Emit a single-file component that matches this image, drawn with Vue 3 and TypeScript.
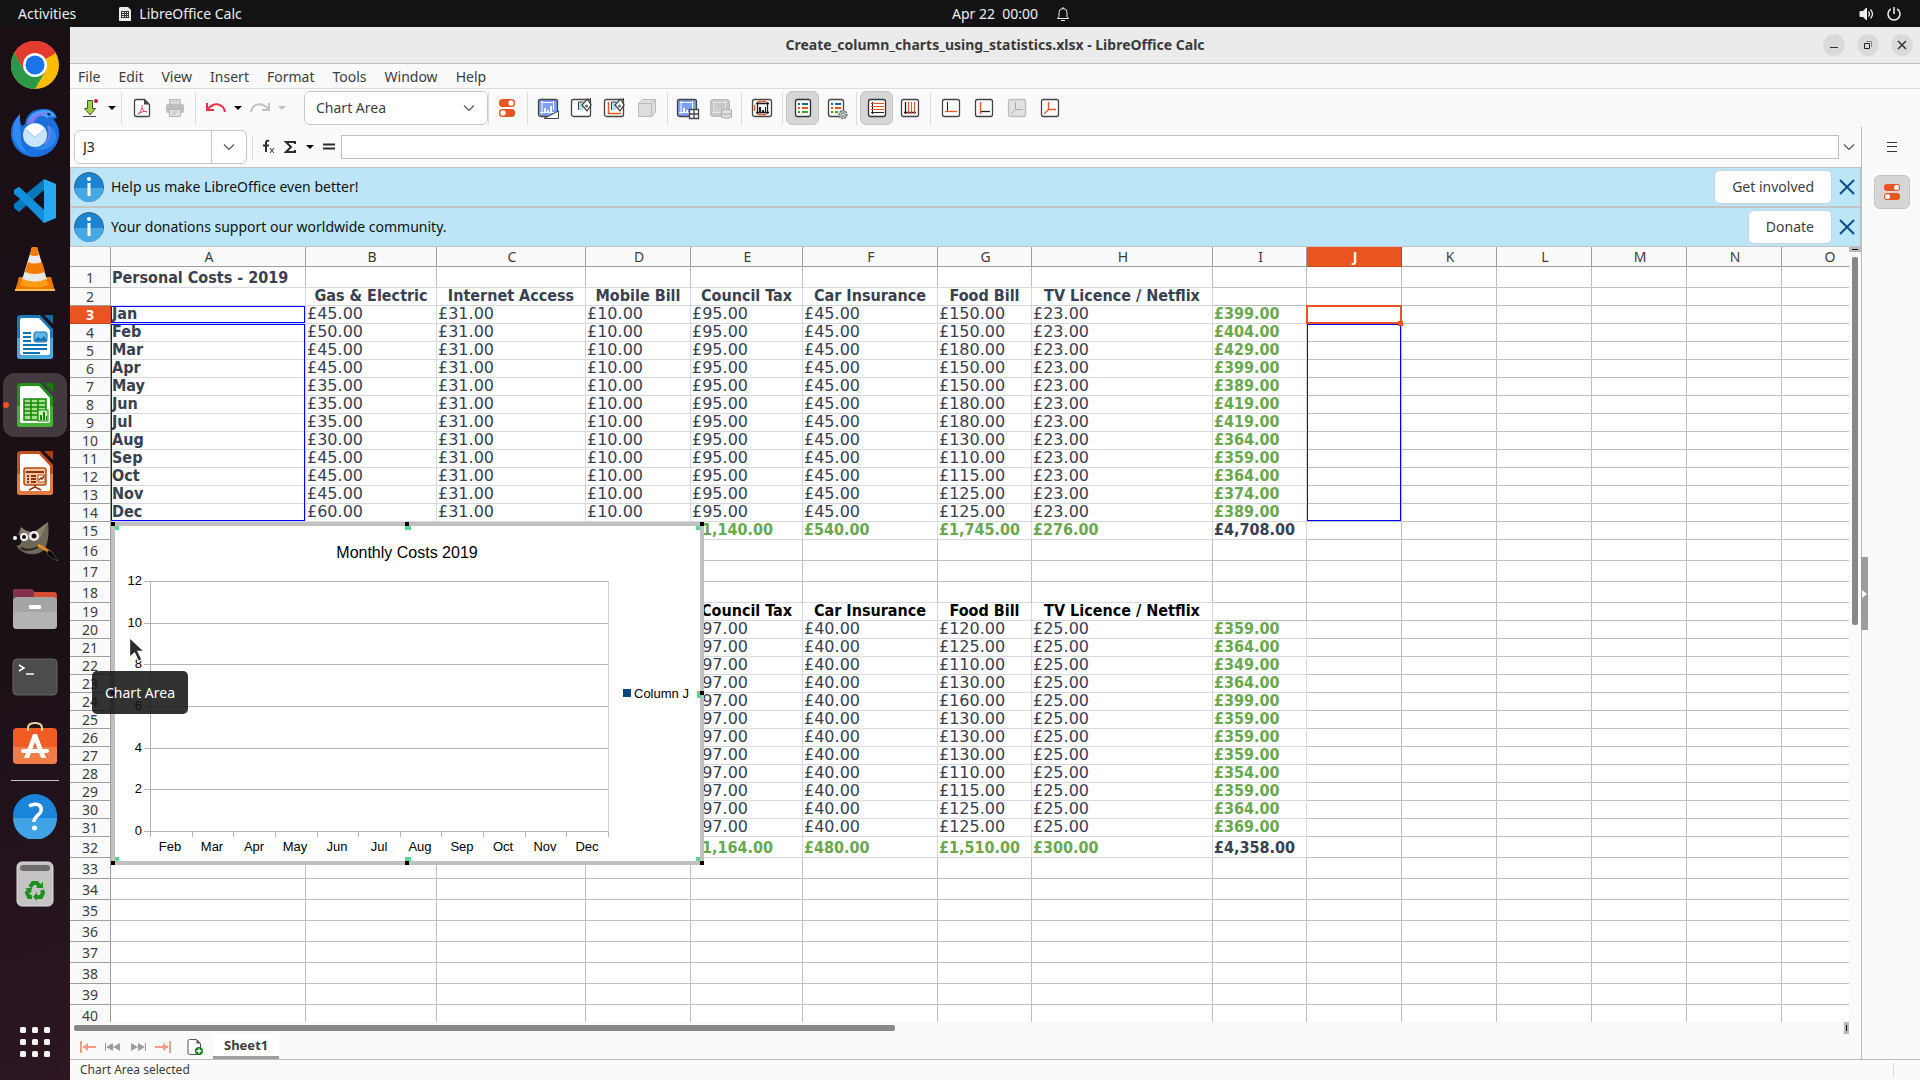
<script setup lang="ts">
import { ref } from 'vue'

interface Cell { text: string; kind: string; edge: string }
interface Row { n: number; height: number; cells: Cell[] }

const columns = [
  { name: 'A', width: 195 }, { name: 'B', width: 131 }, { name: 'C', width: 149 },
  { name: 'D', width: 105 }, { name: 'E', width: 112 }, { name: 'F', width: 135 },
  { name: 'G', width: 94 }, { name: 'H', width: 181 }, { name: 'I', width: 94 },
  { name: 'J', width: 95 }, { name: 'K', width: 95 }, { name: 'L', width: 95 },
  { name: 'M', width: 95 }, { name: 'N', width: 95 }, { name: 'O', width: 95 },
]

const months = ['Jan', 'Feb', 'Mar', 'Apr', 'May', 'Jun', 'Jul', 'Aug', 'Sep', 'Oct', 'Nov', 'Dec']
const gas = [45, 50, 45, 45, 35, 35, 35, 30, 45, 45, 45, 60]
const food2019 = [150, 150, 180, 150, 150, 180, 180, 130, 110, 115, 125, 125]
const total2019 = [399, 404, 429, 399, 389, 419, 419, 364, 359, 364, 374, 389]
const food2020 = [120, 125, 110, 130, 160, 130, 130, 130, 110, 115, 125, 125]
const total2020 = [359, 364, 349, 364, 399, 359, 359, 359, 354, 359, 364, 369]
const heads = ['', 'Gas & Electric', 'Internet Access', 'Mobile Bill', 'Council Tax', 'Car Insurance', 'Food Bill', 'TV Licence / Netflix']

const pounds = (v: number): string => '£' + v.toLocaleString('en-GB') + '.00'

function valueAt(row: number, col: number): [string, string] {
  if (row === 1 && col === 0) return ['Personal Costs - 2019', 'bold']
  if (row === 2 && col < 8) return [heads[col], 'bold center']
  if (row >= 3 && row <= 14) {
    const i = row - 3
    if (col === 0) return [months[i], 'bold']
    if (col === 8) return [pounds(total2019[i]), 'bold green']
    const v = [0, gas[i], 31, 10, 95, 45, food2019[i], 23][col]
    return v ? [pounds(v), ''] : ['', '']
  }
  if (row === 15 && col >= 4 && col <= 8) {
    return [pounds([1140, 540, 1745, 276, 4708][col - 4]), col === 8 ? 'bold' : 'bold green']
  }
  if (row === 19 && col >= 4 && col < 8) return [heads[col], 'bold center black']
  if (row >= 20 && row <= 31) {
    const i = row - 20
    if (col === 8) return [pounds(total2020[i]), 'bold green']
    const v = [0, 0, 0, 0, 97, 40, food2020[i], 25][col]
    return v ? [pounds(v), ''] : ['', '']
  }
  if (row === 32 && col >= 4 && col <= 8) {
    return [pounds([1164, 480, 1510, 300, 4358][col - 4]), col === 8 ? 'bold' : 'bold green']
  }
  return ['', '']
}

function edgeAt(row: number, col: number): string {
  const heading = row === 2 || row === 19
  const body = (row >= 3 && row <= 15) || (row >= 20 && row <= 32)
  if ((heading && col < 8) || (body && col < 9)) return 'soft'
  if ((row === 1 || row === 18) && col < 8) return 'soft-bottom'
  return ''
}

const tall = (n: number): boolean => n === 1 || (n >= 16 && n <= 18) || n >= 32

const rows: Row[] = Array.from({ length: 40 }, (_, i) => {
  const n = i + 1
  return {
    n,
    height: tall(n) ? 21 : 18,
    cells: columns.map((_c, col) => {
      const [text, kind] = valueAt(n, col)
      return { text, kind, edge: edgeAt(n, col) }
    }),
  }
})

const menus = ['File', 'Edit', 'View', 'Insert', 'Format', 'Tools', 'Window', 'Help']
const notices = [
  { text: 'Help us make LibreOffice even better!', action: 'Get involved' },
  { text: 'Your donations support our worldwide community.', action: 'Donate' },
]
const plot = { left: 39, top: 59, width: 458, height: 250 }
const ticks = [12, 10, 8, 6, 4, 2, 0].map((v, i) => ({ v, y: Math.round(plot.top + (plot.height / 6) * i) }))
const step = plot.width / 11
const cats = months.slice(1).map((m, i) => ({ m, x: Math.floor(plot.left + step * (i + 0.5)) }))
const marks = Array.from({ length: 12 }, (_, i) => Math.round(plot.left + step * i))

const element = ref('Chart Area')
const nameBox = ref('J3')
const formula = ref('')
</script>

<template>
  <div class="desktop">
    <header class="topbar">
      <div class="top-left">
        <button class="plain">Activities</button>
        <button class="plain app-menu">
          <svg width="12" height="14" viewBox="0 0 12 14"><path d="M1 0h8l3 3v11H0V1z" fill="#ececec" /><path d="M2 4h8v7H2z" fill="#333" /><path d="M3 5h2v1H3zm3 0h1v1H6zm2 0h1v1H8zM3 7h2v1H3zm3 0h1v1H6zm2 0h1v1H8zM3 9h2v1H3zm3 0h1v1H6zm2 0h1v1H8z" fill="#ececec" /></svg>
          <span>LibreOffice Calc</span>
        </button>
      </div>
      <button class="plain clock">
        <span>Apr 22&nbsp; 00:00</span>
        <svg width="14" height="16" viewBox="0 0 14 16" fill="none" stroke="#eee"><path d="M1.500 12.500h11l-1.500-2V6.500a4 4 0 0 0-8 0v4zM7 1v2M5 14.500h4" /></svg>
      </button>
      <div class="top-right">
        <svg width="16" height="16" viewBox="0 0 16 16" fill="none" stroke="#eee"><path d="M1 5.500h3L7.500 2v12L4 10.500H1z" fill="#eee" /><path d="M9.500 5.500q2 2.500 0 5M11.500 3.500q4 4.500 0 9" stroke-width="1.300" /></svg>
        <svg width="16" height="16" viewBox="0 0 16 16" fill="none" stroke="#eee" stroke-width="1.500"><path d="M4.800 3a6 6 0 1 0 6.400 0M8 1v7" /></svg>
      </div>
    </header>

    <div class="main">
      <nav class="dock" aria-label="Dock">
        <button class="dock-item" aria-label="Chrome">
          <svg width="48" height="48" viewBox="0 0 48 48"><circle cx="24" cy="24" r="24" fill="#fbbc04" /><path d="M24 24L3.200 12A24 24 0 0 1 44.800 12z" fill="#e33b2e" /><path d="M24 12h20.800A24 24 0 0 0 3.200 12l10.400 18z" fill="#e33b2e" /><path d="M3.200 12A24 24 0 0 0 24 48l10.400-18L24 34l-10.400-4z" fill="#2a9846" /><circle cx="24" cy="24" r="12" fill="#fff" /><circle cx="24" cy="24" r="9.500" fill="#1a73e8" /></svg>
        </button>
        <button class="dock-item" aria-label="Thunderbird">
          <svg width="48" height="48" viewBox="0 0 48 48"><path d="M14 15Q16 1 31 0q12-1 15 9l-4 1q6 6 6 14a24 23 0 0 1-48 2Q-1 14 9 5q-1 7 2 12z" fill="#1a6fdd" /><path d="M9 5Q1 13 2 27q3 14 17 19Q8 38 10 25 8 14 9 5" fill="#2f8bf0" /><path d="M16 13Q20 2 33 1q9 0 12 7-6-2-9 1-4-4-11-1-5 1-9 5" fill="#46a4ff" /><path d="M15 15Q24 1 38 4 26 6 22 14z" fill="#8a78e8" /><circle cx="24" cy="26" r="12" fill="#c9e4ff" /><path d="M14 20l10 8 10-8q-4-5-10-5t-10 5" fill="#fff" /><path d="M14 20l10 8 10-8" fill="none" stroke="#9ac5ec" /><path d="M37 16q6 14-7 22l-9 1q14 6 23-6 4-11-7-17" fill="#2989ef" /><path d="M37 17q5 11-4 18" fill="none" stroke="#6f7ff0" stroke-width="2" /><path d="M36 4h3l1 2-3 1z" fill="#0b2e70" /></svg>
        </button>
        <button class="dock-item" aria-label="Visual Studio Code">
          <svg width="44" height="46" viewBox="0 0 44 46"><path d="M31 1l12 5v34l-12 5z" fill="#27a9f2" /><path d="M31 1v11L6 34l-5-4v-4z" fill="#0878bd" /><path d="M1 16v-4l5-3 25 23v13L6 20z" fill="#0b8edb" /><path d="M1 12l5-3 25 23v13z" fill="#118fdd" /></svg>
        </button>
        <button class="dock-item" aria-label="VLC">
          <svg width="42" height="46" viewBox="0 0 42 46"><path d="M5 31h32l4 14H1z" fill="#ee7900" /><path d="M1 43h40v2H1z" fill="#ffc04a" /><path d="M18 1h5l10 33q-12 6-25 0z" fill="#e9e9e9" /><path d="M18 1h5l2 8q-4 2-9 0zM14 16q6 3 14 0l3 10q-10 4-20 0z" fill="#f47b00" /><path d="M9 33q12 5 23 0l3 6q-14 5-29 0z" fill="#ff9b15" /></svg>
        </button>
        <button class="dock-item" aria-label="LibreOffice Writer">
          <svg width="38" height="46" viewBox="0 0 38 46"><path d="M5 1h19l13 14v27q0 3-3 3H4q-3 0-3-3V5q0-4 4-4" fill="#1b79b8" /><path d="M1 24h36v18q0 3-3 3H4q-3 0-3-3z" fill="#4ba9de" /><path d="M6 4h17l11 12v23q0 2-2 2H6q-2 0-2-2V6q0-2 2-2" fill="#fff" /><path d="M28 1h9v9z" fill="#156aa5" /><path d="M7 18h8v2H7zm0 4h8v2H7zm0 4h8v2H7zm0 4h24v2H7zm0 4h24v2H7zm0 4h17v2H7z" fill="#0b75b9" /><rect x="18" y="18" width="13" height="10" rx="2" fill="#66b4df" stroke="#0b75b9" /><path d="M18 27l4-4 3 2 3-3 3 5z" fill="#0b75b9" /></svg>
        </button>
        <button class="dock-item active" aria-label="LibreOffice Calc">
          <svg width="38" height="46" viewBox="0 0 38 46"><path d="M5 1h19l13 14v27q0 3-3 3H4q-3 0-3-3V5q0-4 4-4" fill="#219312" /><path d="M1 24h36v18q0 3-3 3H4q-3 0-3-3z" fill="#44b236" /><path d="M6 4h17l11 12v23q0 2-2 2H6q-2 0-2-2V6q0-2 2-2" fill="#fff" /><path d="M28 1h9v9z" fill="#147d0b" /><path d="M8 17h22v21H8z" fill="#a7e08a" stroke="#13860a" stroke-width="1.500" /><path d="M8 21h22M8 25h22M8 29h22M8 33h22M15 17v21M22 17v21" stroke="#13860a" stroke-width="1.500" /><rect x="22" y="28" width="10" height="11" fill="#ccefb9" stroke="#13860a" /><path d="M24 33h2v5h-2zm3-3h2v8h-2zm3 4h1v4h-1z" fill="#13860a" /></svg>
        </button>
        <button class="dock-item" aria-label="LibreOffice Impress">
          <svg width="38" height="46" viewBox="0 0 38 46"><path d="M5 1h19l13 14v27q0 3-3 3H4q-3 0-3-3V5q0-4 4-4" fill="#c2501c" /><path d="M1 24h36v18q0 3-3 3H4q-3 0-3-3z" fill="#e07b44" /><path d="M6 4h17l11 12v23q0 2-2 2H6q-2 0-2-2V6q0-2 2-2" fill="#fff" /><path d="M28 1h9v9z" fill="#a8400e" /><rect x="8" y="18" width="22" height="17" rx="2" fill="#f4c5a6" stroke="#b34a10" stroke-width="1.500" /><path d="M10 21h18v2H10zm5 4h5v2h-5zm0 3h5v2h-5zm0 3h5v2h-5zm-4-6h2v2h-2zm0 3h2v2h-2zm0 3h2v2h-2z" fill="#8f3508" /><path d="M22 25h7v7h-7z" fill="#fff" stroke="#b34a10" /><path d="M23 30l2-2 1 1 2-3M19 35v2l-6 3M19 37l6 3" fill="none" stroke="#8f3508" stroke-width="1.500" /></svg>
        </button>
        <button class="dock-item" aria-label="GIMP">
          <svg width="48" height="44" viewBox="0 0 48 44"><path d="M10 8q7 7 15 4l12-9q2 16-3 27-8 8-20 4Q6 30 4 24z" fill="#6f6858" /><path d="M10 8q7 7 15 4l12-9-8 16-18 3z" fill="#8a816d" /><circle cx="5" cy="21" r="6" fill="#151515" /><circle cx="4" cy="19" r="2" fill="#fff" /><circle cx="13" cy="18" r="4" fill="#eee" /><circle cx="23" cy="17" r="5" fill="#eee" /><circle cx="13" cy="18" r="2" fill="#111" /><circle cx="23" cy="17" r="2.500" fill="#111" /><path d="M10 29q8 4 17-1" stroke="#222" stroke-width="2" fill="none" /><path d="M27 26l12 7" stroke="#e88b20" stroke-width="3" /><path d="M37 31l4 2 6 9q-7-2-11-7z" fill="#080808" stroke="#777" stroke-width=".5" /></svg>
        </button>
        <button class="dock-item" aria-label="Files">
          <svg width="46" height="42" viewBox="0 0 46 42"><path d="M1 12V4q0-3 3-3h14q3 0 4 3h20q3 0 3 4v4z" fill="#d84c2f" /><path d="M1 12V4q0-3 3-3h14q3 0 4 3v8z" fill="#84304f" /><rect x="1" y="9" width="44" height="32" rx="4" fill="#a5a5a5" /><path d="M1 24h44v13q0 4-4 4H5q-4 0-4-4z" fill="#b3b3b3" /><rect x="17" y="17" width="12" height="4" rx="1" fill="#fff" /></svg>
        </button>
        <button class="dock-item" aria-label="Terminal">
          <svg width="46" height="38" viewBox="0 0 46 38"><rect x="1" y="1" width="44" height="36" rx="4" fill="#4c4c4c" stroke="#656565" /><path d="M7 7l5 3-5 3M14 16h8" fill="none" stroke="#fff" stroke-width="1.500" /></svg>
        </button>
        <button class="dock-item" aria-label="Software">
          <svg width="46" height="48" viewBox="0 0 46 48"><rect x="1" y="7" width="44" height="36" rx="4" fill="#f05c24" /><path d="M1 26h44v13q0 4-4 4H5q-4 0-4-4z" fill="#f27c48" /><path d="M16 10V7q0-5 7-5t7 5v3" fill="none" stroke="#f6d7a5" stroke-width="2" /><path d="M21 13h4l9 24h-5l-6-16-6 16h-5z" fill="#fff" /><rect x="9" y="28" width="28" height="4" rx="2" fill="#fff" /></svg>
        </button>
        <div class="dock-sep"></div>
        <button class="dock-item" aria-label="Help">
          <svg width="46" height="46" viewBox="0 0 46 46"><circle cx="23" cy="23" r="22" fill="#1a85da" /><path d="M1 25a22 22 0 0 0 44 0z" fill="#3fa3e6" /><path d="M17 13q6-3 10-1 4 3 1 8l-4 4q-2 2-2 5" fill="none" stroke="#fff" stroke-width="3.500" /><circle cx="22.500" cy="35" r="2.500" fill="#fff" /></svg>
        </button>
        <button class="dock-item" aria-label="Trash">
          <svg width="38" height="46" viewBox="0 0 38 46"><rect x="1" y="1" width="36" height="44" rx="5" fill="#c4c4c4" stroke="#dedede" /><rect x="4" y="4" width="30" height="6" rx="3" fill="#6d6d6d" /><g fill="none" stroke="#1f8f1d" stroke-width="4"><path d="M14 26l3-4h4l2 3M26 29l1 3-2 4h-4M16 36h-3l-2-4 2-3" /></g><path d="M20 27h7v-6zM21 31v9l-4-4zM9 27l7 0-1 5z" fill="#1f8f1d" /></svg>
        </button>
        <button class="dock-item last" aria-label="Show applications">
          <svg width="30" height="30" viewBox="0 0 30 30" fill="#f3f3f3"><rect v-for="i in 9" :key="i" :x="((i - 1) % 3) * 12" :y="Math.floor((i - 1) / 3) * 12" width="6" height="6" rx="1.500" /></svg>
        </button>
      </nav>

      <section class="window">
        <div class="titlebar">
          <h1>Create_column_charts_using_statistics.xlsx - LibreOffice Calc</h1>
          <div class="win-buttons">
            <button aria-label="Minimise"><svg width="10" height="10" viewBox="0 0 10 10"><path d="M1 7.500h8" stroke="#333" /></svg></button>
            <button aria-label="Restore"><svg width="10" height="10" viewBox="0 0 10 10" fill="none"><path d="M3 1.500h5.500V7" stroke="#888" /><path d="M1.500 3.500h5v5h-5z" stroke="#222" /></svg></button>
            <button aria-label="Close"><svg width="10" height="10" viewBox="0 0 10 10"><path d="M1 1l8 8M9 1L1 9" stroke="#333" stroke-width="1.500" /></svg></button>
          </div>
        </div>

        <nav class="menubar" aria-label="Menu bar">
          <button v-for="m in menus" :key="m">{{ m }}</button>
        </nav>

        <div class="toolbar" role="toolbar" aria-label="Chart">
          <button class="tool" aria-label="Save"><svg width="24" height="24" viewBox="0 0 24 24"><path d="M9.500 4.500h5v8h3L12 19l-5.500-6.500h3z" fill="#9fd04a" stroke="#4d5a30" /><path d="M5 20.500h13" stroke="#444" /><circle cx="18" cy="5" r="2" fill="#d11538" /></svg></button>
          <button class="drop" aria-label="Save options"></button>
          <span class="sep"></span>
          <button class="tool" aria-label="Export as PDF"><svg width="24" height="24" viewBox="0 0 24 24"><path d="M6.500 3.500h8l5 5v11q0 1-1 1h-12q-2 0-2-2v-13q0-2 2-2z" fill="#fff" stroke="#444" stroke-width="1.300" /><path d="M14 3.500v5h5z" fill="#444" /><path d="M12 9v3q-2 5-4 6 6-4 9-2-4 0-5-4" fill="none" stroke="#e8445f" /></svg></button>
          <button class="tool" aria-label="Print"><svg width="24" height="24" viewBox="0 0 24 24"><path d="M6.500 3.500h11v5h-11z" fill="#d9d9d9" stroke="#bbb" /><rect x="3" y="8" width="18" height="9" rx="2" fill="#bebebe" /><path d="M6.500 13.500h11v7h-11z" fill="#e4e4e4" stroke="#b5b5b5" /><path d="M9 16h6M9 18h4" stroke="#bbb" /></svg></button>
          <span class="sep"></span>
          <button class="tool" aria-label="Undo"><svg width="24" height="24" viewBox="0 0 24 24" fill="none" stroke="#ef2f48" stroke-width="2"><path d="M3 7v7h7M3.500 13q6-6 11-4.500Q20 10 21 16" /></svg></button>
          <button class="drop" aria-label="Undo list"></button>
          <button class="tool" aria-label="Redo"><svg width="24" height="24" viewBox="0 0 24 24" fill="none" stroke="#c1c1c1" stroke-width="2"><path d="M21 7v7h-7M20.500 13q-6-6-11-4.500Q4 10 3 16" /></svg></button>
          <button class="drop off" aria-label="Redo list"></button>
          <label class="combo">
            <select v-model="element" aria-label="Select chart element"><option>Chart Area</option></select>
            <svg width="12" height="8" viewBox="0 0 12 8"><path d="M1 1.500l5 5 5-5" fill="none" stroke="#555" stroke-width="1.200" /></svg>
          </label>
          <span class="sep tight"></span>
          <button class="tool" aria-label="Format selection"><svg width="24" height="24" viewBox="0 0 24 24"><rect x="4" y="3" width="16" height="8" rx="3.500" fill="#e95420" /><circle cx="16" cy="7" r="2.700" fill="#fff" /><rect x="4" y="13" width="16" height="8" rx="3.500" fill="#e95420" /><circle cx="8" cy="17" r="2.700" fill="#fff" /></svg></button>
          <span class="sep"></span>
          <button class="tool" aria-label="Chart type"><svg width="24" height="24" viewBox="0 0 24 24"><rect x="2.500" y="3.500" width="19" height="17" rx="2" fill="#7d9ff6" stroke="#454545" stroke-width="1.300" /><path d="M6 5v13M4 16.500h14M5 6.500h13M17.500 5v9" stroke="#fff" /><path d="M8 12h2v5H8zm3 2h2v3h-2zm3-4h2v7h-2z" fill="#fff" /><path d="M8 22.500L22.500 15v7.500z" fill="#fff" stroke="#444" /></svg></button>
          <button class="tool" aria-label="Chart area"><svg width="24" height="24" viewBox="0 0 24 24"><rect x="2.500" y="3.500" width="19" height="17" rx="2" fill="#fff" stroke="#454545" stroke-width="1.300" /><path d="M9.500 14V6h5" fill="#a8e1f6" stroke="#444" /><path d="M10 7h4v7h-4z" fill="#a8e1f6" /><path d="M18.500 3l3.500 6-4 6-5-6z" fill="#fff" stroke="#444" stroke-width="1.300" /><circle cx="17.500" cy="10" r="1.500" fill="#666" /><path d="M21.500 2v8" fill="none" stroke="#444" /></svg></button>
          <button class="tool" aria-label="Chart wall"><svg width="24" height="24" viewBox="0 0 24 24"><rect x="2.500" y="3.500" width="19" height="17" rx="2" fill="#fff" stroke="#454545" stroke-width="1.300" /><path d="M6.500 6v11.500H19" fill="none" stroke="#e95420" stroke-width="1.500" /><path d="M9.500 14V6h5" fill="#a8e1f6" stroke="#444" /><path d="M10 7h4v7h-4z" fill="#a8e1f6" /><path d="M18.500 3l3.500 6-4 6-5-6z" fill="#fff" stroke="#444" stroke-width="1.300" /><circle cx="17.500" cy="10" r="1.500" fill="#666" /><path d="M21.500 2v8" fill="none" stroke="#444" /></svg></button>
          <button class="tool" aria-label="3D view"><svg width="24" height="24" viewBox="0 0 24 24" fill="#dedede" stroke="#bbb"><path d="M3.500 7.500l4-4h13v13l-4 4h-13z" /><path d="M3.500 7.500h13v13M16.500 7.500l4-4" fill="none" /></svg></button>
          <span class="sep"></span>
          <button class="tool" aria-label="Data ranges"><svg width="24" height="24" viewBox="0 0 24 24"><rect x="1.500" y="3.500" width="19" height="17" rx="2" fill="#7d9ff6" stroke="#454545" stroke-width="1.300" /><path d="M5 5v13M3 16.500h14M4 6.500h13M16.500 5v9" stroke="#fff" /><path d="M7 12h2v5H7zm3 2h2v3h-2z" fill="#fff" /><path d="M13.500 13.500h9v9h-9zM18 13.500v9M13.500 18h9" fill="#fff" stroke="#454545" stroke-width="1.300" /></svg></button>
          <button class="tool" aria-label="Data table"><svg width="24" height="24" viewBox="0 0 24 24"><rect x="1.500" y="3.500" width="19" height="17" rx="2" fill="#c8c8c8" stroke="#bbb" /><path d="M5 5v13M3 16.500h10M4 6.500h13M16.500 5v9M8 12v5M11 13v4" stroke="#e8e8e8" /><path d="M12.500 14v7q5 3 10 0v-7q-5-2-10 0M12.500 17.500q5 2 10 0" fill="#ddd" stroke="#aaa" /></svg></button>
          <span class="sep"></span>
          <button class="tool" aria-label="Titles"><svg width="24" height="24" viewBox="0 0 24 24"><rect x="2.500" y="3.500" width="19" height="17" rx="2" fill="#fff" stroke="#454545" stroke-width="1.300" /><path d="M8 5.500h8M8 18.500h8M4.500 9v6" stroke="#e95420" stroke-width="1.300" /><path d="M7.500 6v12M6 16.500h13M6 7.500h13M17.500 6v12" stroke="#222" stroke-width="1.300" /><path d="M9 11h2v5H9zm3 3h2v2h-2zm3-3h1v5h-1z" fill="#222" /></svg></button>
          <span class="sep"></span>
          <button class="tool on" aria-label="Legend"><svg width="24" height="24" viewBox="0 0 24 24"><rect x="4.500" y="3.500" width="15" height="17" rx="2" fill="#fff" stroke="#333" stroke-width="1.300" /><path d="M7 8h2M11 8h6" stroke="#1269a8" stroke-width="2" /><path d="M7 12h2M11 12h6" stroke="#e95420" stroke-width="2" /><path d="M7 16h2M11 16h6" stroke="#44a514" stroke-width="2" /></svg></button>
          <button class="tool" aria-label="Format legend"><svg width="24" height="24" viewBox="0 0 24 24"><rect x="4.500" y="3.500" width="15" height="17" rx="2" fill="#fff" stroke="#444" stroke-width="1.300" /><path d="M7 8h2M11 8h6" stroke="#1269a8" stroke-width="2" /><path d="M7 12h2M11 12h6" stroke="#e95420" stroke-width="2" /><path d="M7 16h2M11 16h3" stroke="#44a514" stroke-width="2" /><circle cx="19" cy="18.500" r="4" fill="#bbb" stroke="#777" stroke-dasharray="2 1" stroke-width="1.500" /><circle cx="19" cy="18.500" r="1.500" fill="#fff" stroke="#777" /></svg></button>
          <span class="sep"></span>
          <button class="tool on" aria-label="Horizontal grids"><svg width="24" height="24" viewBox="0 0 24 24"><rect x="3.500" y="3.500" width="17" height="17" rx="2" fill="#fff" stroke="#333" stroke-width="1.300" /><path d="M7.500 6v12M6 16.500h13" fill="none" stroke="#222" /><path d="M6 7.500h13M6 10.500h13M6 13.500h13" stroke="#e95420" /></svg></button>
          <button class="tool" aria-label="Vertical grids"><svg width="24" height="24" viewBox="0 0 24 24"><rect x="3.500" y="3.500" width="17" height="17" rx="2" fill="#fff" stroke="#444" stroke-width="1.300" /><path d="M7.500 6v12M6 16.500h12" stroke="#222" stroke-width="1.300" /><path d="M10.500 6v12M13.500 6v12M16.500 6v12" stroke="#e95420" /></svg></button>
          <span class="sep"></span>
          <button class="tool" aria-label="X axis"><svg width="24" height="24" viewBox="0 0 24 24"><rect x="3.500" y="3.500" width="17" height="17" rx="2" fill="#fff" stroke="#444" stroke-width="1.300" /><path d="M8.500 6v9" stroke="#222" /><path d="M6 15.500h12" stroke="#e95420" stroke-width="1.300" /></svg></button>
          <button class="tool" aria-label="Y axis"><svg width="24" height="24" viewBox="0 0 24 24"><rect x="3.500" y="3.500" width="17" height="17" rx="2" fill="#fff" stroke="#444" stroke-width="1.300" /><path d="M8 15.500h10" stroke="#222" stroke-width="1.300" /><path d="M8.500 6v12" stroke="#e95420" stroke-width="1.300" /></svg></button>
          <button class="tool" aria-label="Z axis"><svg width="24" height="24" viewBox="0 0 24 24"><rect x="3.500" y="3.500" width="17" height="17" rx="2" fill="#e1e1e1" stroke="#bdbdbd" stroke-width="1.300" /><path d="M10.500 6v7.500H18M10.500 13.500L6 18" fill="none" stroke="#aaa" /></svg></button>
          <button class="tool" aria-label="All axes"><svg width="24" height="24" viewBox="0 0 24 24"><rect x="3.500" y="3.500" width="17" height="17" rx="2" fill="#fff" stroke="#444" stroke-width="1.300" /><path d="M10.500 6v7.500H18M10.500 13.500L6 18" fill="none" stroke="#e95420" stroke-width="1.300" /></svg></button>
        </div>

        <div class="workspace">
          <div class="document">
            <div class="formula-bar">
              <div class="name-box">
                <input v-model="nameBox" aria-label="Name box" />
                <button aria-label="Named ranges"><svg width="12" height="8" viewBox="0 0 12 8"><path d="M1 1.500l5 5 5-5" fill="none" stroke="#555" stroke-width="1.200" /></svg></button>
              </div>
              <span class="fsep"></span>
              <button class="fn" aria-label="Function wizard"><svg width="14" height="18" viewBox="0 0 14 18" fill="none" stroke="#2d2d2d"><path d="M7 3q-3-1-3 2v9M1 7.500h6" stroke-width="2" /><path d="M8 10l4 5M12 10l-4 5" /></svg></button>
              <button class="fn" aria-label="Select function"><svg width="12" height="18" viewBox="0 0 12 18"><path d="M11 6V4H2l5 5-5 5h9v-2" fill="none" stroke="#2d2d2d" stroke-width="2" /></svg></button>
              <button class="drop" aria-label="Function list"></button>
              <button class="fn" aria-label="Formula"><svg width="12" height="18" viewBox="0 0 12 18"><path d="M0 6.500h12M0 10.500h12" stroke="#2d2d2d" stroke-width="2" /></svg></button>
              <input v-model="formula" class="formula" aria-label="Formula input" />
              <button class="expand" aria-label="Expand formula bar"><svg width="12" height="8" viewBox="0 0 12 8"><path d="M1 1.500l5 5 5-5" fill="none" stroke="#555" stroke-width="1.200" /></svg></button>
            </div>

            <div v-for="n in notices" :key="n.action" class="infobar">
              <svg width="30" height="30" viewBox="0 0 30 30"><circle cx="15" cy="15" r="14.500" fill="#1c84d4" stroke="#39617e" /><path d="M1 16a14 14 0 0 0 28 0z" fill="#47a7e3" /><circle cx="15" cy="7" r="2" fill="#fff" /><path d="M13.500 11h3v13h-3z" fill="#fff" /></svg>
              <p>{{ n.text }}</p>
              <button class="action">{{ n.action }}</button>
              <button class="close" aria-label="Close infobar"><svg width="16" height="16" viewBox="0 0 16 16"><path d="M1 1l14 14M15 1L1 15" stroke="#0b4f8a" stroke-width="2" /></svg></button>
            </div>

            <div class="grid-row">
              <div class="sheet">
                <table>
                  <colgroup>
                    <col class="rowhead" />
                    <col v-for="c in columns" :key="c.name" :style="{ width: c.width + 'px' }" />
                  </colgroup>
                  <thead>
                    <tr>
                      <th></th>
                      <th v-for="c in columns" :key="c.name" scope="col" :class="{ current: c.name === 'J' }">{{ c.name }}</th>
                    </tr>
                  </thead>
                  <tbody>
                    <tr v-for="r in rows" :key="r.n" :style="{ height: r.height + 'px' }">
                      <th scope="row" :class="{ current: r.n === 3 }">{{ r.n }}</th>
                      <td v-for="(c, i) in r.cells" :key="i" :class="[c.kind, c.edge]">{{ c.text }}</td>
                    </tr>
                  </tbody>
                </table>

                <div class="range label-cell"></div>
                <div class="range categories"></div>
                <div class="range values"></div>
                <div class="cursor-cell"></div>

                <svg class="chart" width="593" height="343" viewBox="0 0 593 343">
                  <rect x="2" y="2" width="589" height="339" fill="#fff" stroke="#c0c0c0" stroke-width="4" />
                  <g fill="#5bd68f">
                    <path d="M4 4h4v4H4zM294 4h6v4h-6zM585 4h4v4h-4zM4 335h4v4H4zM294 335h6v4h-6zM585 335h4v4h-4zM586 169h4v7h-4z" />
                  </g>
                  <path d="M0 0h4v4H0zM294 0h4v4h-4zM589 0h4v4h-4zM0 339h4v4H0zM294 339h4v4h-4zM589 339h4v4h-4zM0 169h4v4H0zM589 169h4v4h-4z" fill="#000" />
                  <text class="chart-title" x="296" y="36" text-anchor="middle">Monthly Costs 2019</text>
                  <g fill="#b3b3b3">
                    <rect v-for="t in ticks" :key="t.v" x="33" :y="t.y" width="464" height="1" />
                    <rect v-for="x in marks" :key="x" :x="x" y="309" width="1" height="6" />
                    <rect x="39" y="59" width="1" height="250" />
                    <rect x="497" y="59" width="1" height="251" fill="#d0d0d0" />
                  </g>
                  <text v-for="t in ticks" :key="t.v" x="31" :y="t.y + 4" text-anchor="end">{{ t.v }}</text>
                  <text v-for="c in cats" :key="c.m" :x="c.x" y="329" text-anchor="middle">{{ c.m }}</text>
                  <rect x="512" y="167" width="8" height="8" fill="#004586" />
                  <text x="523" y="176">Column J</text>
                </svg>

                <div class="tooltip" role="tooltip">Chart Area</div>
                <svg class="pointer" width="20" height="28" viewBox="0 0 20 28"><path d="M1.500 1.500v20l5-4.500 4 8.500 3.500-2-4-8h6.500z" fill="#2b2b2b" stroke="#fff" stroke-width="1.300" /></svg>
              </div>
              <div class="vscroll"><span class="splitter"></span><span class="thumb"></span></div>
            </div>

            <div class="hscroll"><span class="thumb"></span><span class="splitter"></span></div>

            <div class="tabs">
              <button aria-label="First sheet"><svg width="16" height="14" viewBox="0 0 16 14"><path d="M1 1v12M3 7h13" stroke="#f39c80" stroke-width="2" /><path d="M3 7l5-4v8z" fill="#f39c80" /></svg></button>
              <button aria-label="Previous sheet"><svg width="16" height="14" viewBox="0 0 16 14" fill="#9c9c9c"><path d="M0 3h1v8H0zM8 3v8L1 7zM15 3v8L8 7z" /></svg></button>
              <button aria-label="Next sheet"><svg width="16" height="14" viewBox="0 0 16 14" fill="#9c9c9c"><path d="M15 3h1v8h-1zM8 3v8l7-4zM1 3v8l7-4z" /></svg></button>
              <button aria-label="Last sheet"><svg width="16" height="14" viewBox="0 0 16 14"><path d="M15 1v12M0 7h13" stroke="#f39c80" stroke-width="2" /><path d="M13 7L8 3v8z" fill="#f39c80" /></svg></button>
              <button class="add" aria-label="Add sheet"><svg width="16" height="16" viewBox="0 0 16 16"><path d="M2.500.5h7l4 4v11h-11q-1.500 0-1.500-1.500V2Q1 .5 2.500.5z" fill="#fff" stroke="#555" /><path d="M9.500.5v4h4z" fill="#555" /><circle cx="12" cy="12" r="4" fill="#15801f" /><path d="M9.500 12h5M12 9.500v5" stroke="#fff" stroke-width="1.300" /></svg></button>
              <button class="tab">Sheet1</button>
            </div>
          </div>

          <aside class="sidebar" aria-label="Sidebar">
            <button class="side-menu" aria-label="Sidebar settings"><svg width="10" height="10" viewBox="0 0 10 10"><path d="M0 .5h10M0 4.500h10M0 9.500h10" stroke="#333" /></svg></button>
            <button class="side-tab" aria-label="Properties"><svg width="24" height="24" viewBox="0 0 24 24"><rect x="4" y="4" width="16" height="7" rx="3" fill="#e95420" /><circle cx="16.500" cy="7.500" r="2.500" fill="#fff" /><rect x="4" y="13" width="16" height="7" rx="3" fill="#e95420" /><circle cx="7.500" cy="16.500" r="2.500" fill="#fff" /></svg></button>
            <button class="handle" aria-label="Hide sidebar"><svg width="5" height="8" viewBox="0 0 5 8"><path d="M0 0l5 4-5 4z" fill="#fff" /></svg></button>
          </aside>
        </div>

        <footer class="status"><span>Chart Area selected</span><i></i></footer>
      </section>
    </div>
  </div>
</template>

<style>
body { margin: 0; }
</style>

<style scoped>
.desktop { height: 100vh; display: flex; flex-direction: column; overflow: hidden; font: 14px/20px "Noto Sans", sans-serif; color: #3d3d3d; }
.desktop *, .desktop *::before { box-sizing: border-box; }
button { font: inherit; color: inherit; border: 0; padding: 0; margin: 0; background: none; display: flex; align-items: center; justify-content: center; }
input, select { font: inherit; color: #222; border: 0; padding: 0; margin: 0; background: #fff; min-width: 0; }
svg { display: block; flex: none; }

.topbar { height: 27px; flex: none; display: grid; grid-template-columns: 1fr auto 1fr; align-items: center; background: #131313; color: #ededed; padding: 0 18px; }
.top-left { display: flex; gap: 43px; }
.app-menu { gap: 8px; }
.clock { gap: 18px; padding-left: 102px; }
.top-right { display: flex; justify-content: flex-end; gap: 11px; }

.main { flex: 1; min-height: 0; display: flex; }
.dock { width: 70px; flex: none; display: flex; flex-direction: column; align-items: center; gap: 4px; padding: 6px 0; background: linear-gradient(160deg, #190f15 0%, #1c1017 60%, #2c1722 100%); }
.dock-item { width: 64px; height: 64px; flex: none; border-radius: 12px; position: relative; }
.dock-item.active { background: #433a40; }
.dock-item.active::before { content: ""; position: absolute; left: 0; top: 29px; width: 6px; height: 6px; border-radius: 3px; background: #e95420; }
.dock-item.last { margin-top: auto; }
.dock-sep { width: 48px; height: 1px; flex: none; margin: -1px 0; background: #c9c5c7; }

.window { flex: 1; min-width: 0; display: flex; flex-direction: column; background: #fafafa; }
.titlebar { height: 37px; flex: none; display: grid; grid-template-columns: 1fr auto 1fr; align-items: center; background: #ebebeb; border-bottom: 1px solid #bfbfbf; }
.titlebar h1 { grid-column: 2; margin: 0; font: bold 14px/20px "Noto Sans", sans-serif; color: #3a3a3a; }
.win-buttons { display: flex; justify-content: flex-end; gap: 12px; padding-right: 7px; }
.win-buttons button { width: 22px; height: 22px; border-radius: 11px; background: #dadada; }
.menubar { height: 25px; flex: none; display: flex; align-items: center; gap: 18px; padding: 2px 8px 0; border-bottom: 1px solid #dcdcdc; }

.toolbar { height: 38px; flex: none; display: flex; align-items: center; padding-left: 3px; }
.tool { width: 33px; height: 34px; flex: none; border: 1px solid transparent; border-radius: 6px; }
.tool.on { background: #d6d6d6; border-color: #c4c4c4; }
.drop { width: 11px; height: 34px; flex: none; }
.drop::before { content: ""; border: 4px solid transparent; border-top-color: #000; border-bottom: 0; }
.drop.off::before { border-top-color: #c0c0c0; }
.sep { width: 1px; height: 33px; flex: none; margin: 0 3px 0 4px; background: #dcdcdc; }
.sep.tight { margin: 0 1px 0 0; }
.combo { width: 184px; height: 34px; margin-left: 17px; flex: none; display: grid; align-items: center; border: 1px solid #c6c6c6; border-radius: 6px; background: #fff; overflow: hidden; }
.combo select { grid-area: 1 / 1; appearance: none; height: 32px; padding-left: 11px; color: #3d3d3d; }
.combo svg { grid-area: 1 / 1; justify-self: end; margin-right: 12px; }

.workspace { flex: 1; min-height: 0; display: flex; }
.document { flex: 1; min-width: 0; display: flex; flex-direction: column; }
.formula-bar { height: 40px; flex: none; display: flex; align-items: center; padding-left: 4px; }
.name-box { width: 173px; height: 34px; flex: none; display: flex; border: 1px solid #c6c6c6; border-radius: 6px; background: #fff; overflow: hidden; }
.name-box input { flex: 1; padding-left: 8px; }
.name-box button { width: 35px; border-left: 1px solid #c6c6c6; }
.fsep { width: 1px; height: 25px; margin: 0 9px 0 5px; background: #dcdcdc; }
.fn { height: 24px; margin-right: 8px; }
.formula-bar .drop { margin-right: 8px; }
.formula { flex: 1; height: 24px; border: 1px solid #c0c0c0; margin-left: -2px; }
.expand { width: 22px; height: 24px; padding-right: 3px; }

.infobar { height: 40px; flex: none; display: flex; align-items: center; padding: 0 5px 0 3px; background: #bce5f7; border: 1px solid #c3c3c3; color: #111; }
.infobar p { flex: 1; margin: 0 0 0 7px; }
.action { height: 34px; padding: 0 17px; border: 1px solid #c8d4da; border-radius: 6px; background: #fff; color: #3d3d3d; }
.close { margin-left: 7px; width: 16px; }

.grid-row { flex: 1; min-height: 0; display: flex; }
.sheet { position: relative; flex: 1; min-width: 0; overflow: hidden; background: #fff; }
table { width: 1807px; table-layout: fixed; border-collapse: separate; border-spacing: 0; }
.rowhead { width: 41px; }
th { padding: 0; font-weight: normal; background: #fafafa; border-right: 1px solid #9e9e9e; border-bottom: 1px solid #9e9e9e; line-height: 17px; }
thead th { height: 20px; padding-left: 2px; }
th.current { background: #e95420; color: #fff; font-weight: bold; border-color: #c9481b; }
td { height: inherit; padding: 0 1px 1px; border-right: 1px solid #c0c0c0; border-bottom: 1px solid #c0c0c0; font: 16px/16px "DejaVu Sans", sans-serif; color: #374151; white-space: nowrap; vertical-align: bottom; }
td.bold { font-family: "DejaVu Sans Condensed", "DejaVu Sans", sans-serif; font-weight: bold; }
td.center { text-align: center; }
td.green { color: #6aa84f; }
td.black { color: #000; }
td.soft { border-color: #d8d8e4; }
td.soft-bottom { border-bottom-color: #d8d8e4; }

.range { position: absolute; border: 1px solid #00f; }
.label-cell { left: 41px; top: 59px; width: 194px; height: 17px; }
.categories { left: 41px; top: 77px; width: 194px; height: 197px; }
.values { left: 1237px; top: 77px; width: 94px; height: 197px; }
.cursor-cell { position: absolute; left: 1236px; top: 58px; width: 96px; height: 19px; border: 2px solid #e95420; }
.cursor-cell::before { content: ""; position: absolute; right: -3px; bottom: -4px; width: 5px; height: 5px; background: #e95420; }
.chart { position: absolute; left: 41px; top: 275px; font: 13px "Liberation Sans", sans-serif; fill: #000; }
.chart-title { font-size: 16px; }
.tooltip { position: absolute; left: 22px; top: 424px; padding: 12px 13px 11px; border-radius: 5px; background: rgba(20, 20, 20, 0.87); color: #fff; }
.pointer { position: absolute; left: 58px; top: 389px; }

.vscroll { width: 12px; flex: none; display: flex; flex-direction: column; align-items: center; }
.vscroll .splitter { width: 12px; height: 5px; border: solid #bababa; border-width: 2px 3px; background: #000; }
.vscroll .thumb { width: 6px; height: 368px; margin-top: 5px; border-radius: 2px; background: #888; }
.hscroll { height: 12px; flex: none; display: flex; align-items: center; justify-content: space-between; padding: 0 12px 0 4px; }
.hscroll .thumb { width: calc(46% + 4px); height: 6px; border-radius: 2px; background: #888; }
.hscroll .splitter { width: 5px; height: 12px; border: solid #bababa; border-width: 3px 2px; background: #000; }
.tabs { height: 25px; flex: none; display: flex; padding-left: 10px; gap: 9px; }
.tabs .add { margin-left: 7px; }
.tab { padding: 0 11px; margin-left: 1px; border-bottom: 3px solid #9e9e9e; background: #fff; font-weight: bold; font-size: 13px; }

.sidebar { position: relative; width: 59px; flex: none; display: flex; flex-direction: column; align-items: center; padding-left: 2px; border-left: 1px solid #bababa; }
.side-menu { width: 36px; height: 34px; margin-top: 3px; }
.side-tab { width: 36px; height: 34px; margin-top: 11px; border: 1px solid #c4c4c4; border-radius: 6px; background: #d6d6d6; }
.handle { position: absolute; left: -1px; top: 430px; width: 7px; height: 73px; background: #9c9c9c; }

.status { height: 21px; flex: none; display: flex; align-items: center; justify-content: space-between; padding: 0 26px 0 10px; border-top: 1px solid #bababa; font-size: 12px; }
.status i { width: 1px; height: 14px; background: #dcdcdc; }
</style>
